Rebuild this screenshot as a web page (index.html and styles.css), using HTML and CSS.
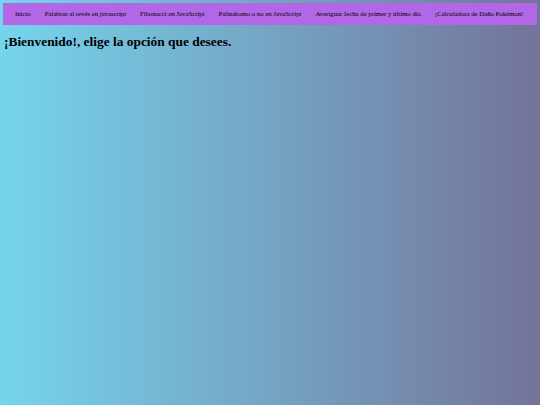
FILE: index.html
```html
<!DOCTYPE html>
<html lang="es">
<head>
<meta charset="utf-8">
<title>Inicio</title>
<link rel="stylesheet" href="styles.css">
</head>
<body>
<nav class="nav">
  <ul class="nav-list">
    <li><a href="#">Inicio</a></li>
    <li><a href="#">Palabras al revés en javascript</a></li>
    <li><a href="#">Fibonacci en JavaScript</a></li>
    <li><a href="#">Palíndromo o no en JavaScript</a></li>
    <li><a href="#">Averiguar fecha de primer y último día</a></li>
    <li><a href="#">¡Calculadora de Daño Pokémon!</a></li>
  </ul>
</nav>
<h1 class="title">¡Bienvenido!, elige la opción que desees.</h1>
</body>
</html>
```
FILE: styles.css
```css
html, body {
  height: 100%;
}
body {
  margin: 0;
  padding: 3px;
  box-sizing: border-box;
  font-family: "Liberation Serif", "Times New Roman", serif;
  background: linear-gradient(to right, #75d5ed, #747399);
  color: #000;
}
.nav {
  background: #b167e6;
  height: 22px;
  display: flex;
  align-items: center;
  padding: 0 12px;
}
.nav-list {
  list-style: none;
  margin: 0;
  padding: 0;
  display: flex;
  gap: 14px;
  white-space: nowrap;
  font-size: 6.75px;
  line-height: 1;
}
.nav-list li {
  flex-shrink: 0;
}
.nav-list a {
  color: #000;
  text-decoration: none;
}
.title {
  margin: 9px 0 0 1px;
  font-size: 13.4px;
  font-weight: bold;
}
```
